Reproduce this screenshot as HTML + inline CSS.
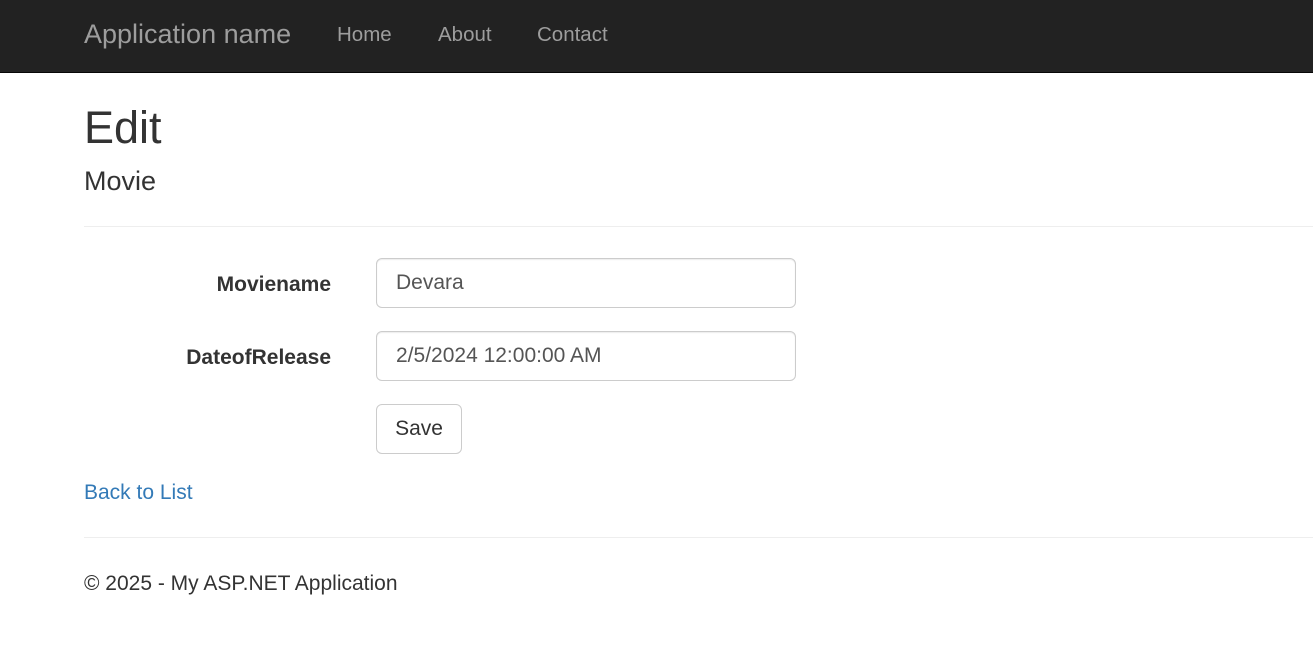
<!DOCTYPE html>
<html><head><meta charset="utf-8"><style>
*{box-sizing:border-box;margin:0;padding:0}
body{width:1313px;height:663px;background:#fff;font-family:"Liberation Sans",Arial,sans-serif;color:#333;position:relative;overflow:hidden}
.nav{position:absolute;left:0;top:0;width:1313px;height:73px;background:#222;border-bottom:1px solid #080808}
.a{position:absolute;white-space:nowrap;line-height:1}
.nav .a{color:#9d9d9d}
.inp{position:absolute;left:376px;width:420px;height:50px;border:1px solid #ccc;border-radius:6px;box-shadow:inset 0 1px 1px rgba(0,0,0,.075);font-size:21px;color:#555;padding-left:19px;line-height:48px}
.hr{position:absolute;left:84px;width:1229px;height:1px;background:#eee}
.lbl{position:absolute;font-weight:bold;font-size:21px;right:982px;line-height:1}
</style></head><body>
<div class="nav">
<div class="a" style="left:84px;top:21px;font-size:27px">Application name</div>
<div class="a" style="left:337px;top:25px;font-size:20.5px">Home</div>
<div class="a" style="left:438px;top:25px;font-size:20.5px">About</div>
<div class="a" style="left:537px;top:25px;font-size:20.5px">Contact</div>
</div>
<div class="a" style="left:84px;top:105px;font-size:45px">Edit</div>
<div class="a" style="left:84px;top:168px;font-size:27px">Movie</div>
<div class="hr" style="top:226px"></div>
<div class="lbl" style="top:274px">Moviename</div>
<div class="inp" style="top:258px">Devara</div>
<div class="lbl" style="top:347px">DateofRelease</div>
<div class="inp" style="top:331px">2/5/2024 12:00:00 AM</div>
<div style="position:absolute;left:376px;top:404px;width:86px;height:50px;border:1px solid #ccc;border-radius:6px;font-size:21px;line-height:48px;text-align:center;color:#333">Save</div>
<div class="a" style="left:84px;top:482px;font-size:21px;color:#337ab7">Back to List</div>
<div class="hr" style="top:537px"></div>
<div class="a" style="left:84px;top:573px;font-size:21px">© 2025 - My ASP.NET Application</div>
</body></html>
